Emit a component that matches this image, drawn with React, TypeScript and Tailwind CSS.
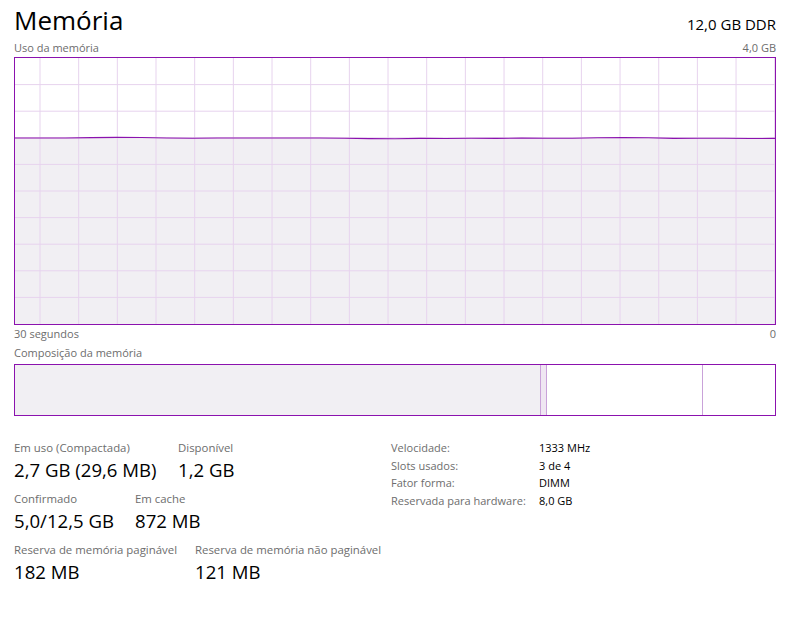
import React from "react";

const font = { fontFamily: '"Open Sans", "Noto Sans", sans-serif' };

function UsageGraph() {
    const w = 760;
    const h = 266;
    const vx = Array.from({ length: 20 }, (_, i) => 25 + i * 38.67).filter((x) => x < w);
    const hy = Array.from({ length: 9 }, (_, i) => (i + 1) * 26.6);
    const level = 80;
    const wobble = [0, 0, 0, -0.4, -0.6, -0.5, 0, 0.2, 0, 0, 0, 0, 0, 0.2, 0.6, 0.8, 0.4, 0.5, 0.3, 0.4, 0.1, 0.3, 0.2, -0.3, -0.4, -0.2, 0.4, 0.3, 0.2, 0.5, 0.4];
    const pts = wobble.map((d, i) => `${(i * w) / (wobble.length - 1)},${level + d}`).join(" ");

    return (
        <svg width={w} height={h} className="block">
            <polygon points={`0,${h} ${pts} ${w},${h}`} fill="#f1eff3" />
            {vx.map((x) => (
                <line key={x} x1={x} y1={0} x2={x} y2={h} stroke="#e7d3ee" strokeWidth={1} />
            ))}
            {hy.map((y) => (
                <line key={y} x1={0} y1={y} x2={w} y2={y} stroke="#e7d3ee" strokeWidth={1} />
            ))}
            <polyline points={pts} fill="none" stroke="#8b12ae" strokeWidth={1.1} />
        </svg>
    );
}

function Stat({ label, value, className = "" }: { label: string; value: string; className?: string }) {
    return (
        <div className={className}>
            <div className="text-[11.4px] leading-[16px] text-[#6d6d6d] whitespace-nowrap">{label}</div>
            <div className="text-[18.6px] leading-[26px] text-black mt-[1px] whitespace-nowrap">{value}</div>
        </div>
    );
}

const details = [
    ["Velocidade:", "1333 MHz"],
    ["Slots usados:", "3 de 4"],
    ["Fator forma:", "DIMM"],
    ["Reservada para hardware:", "8,0 GB"],
];

export default function App() {
    return (
        <div className="w-[800px] h-[623px] bg-white pl-[14px] pr-[24px] overflow-hidden" style={font}>
            <div className="flex items-baseline justify-between h-[40px]">
                <h1 className="text-[26px] leading-[40px] font-normal text-black">Memória</h1>
                <span className="text-[15px] text-black">12,0 GB DDR</span>
            </div>
            <div className="flex justify-between text-[11px] leading-[16px] text-[#6d6d6d]">
                <span>Uso da memória</span>
                <span>4,0 GB</span>
            </div>
            <div className="border border-[#8b12ae] mt-[1px]">
                <UsageGraph />
            </div>
            <div className="flex justify-between text-[11px] leading-[18px] text-[#6d6d6d]">
                <span>30 segundos</span>
                <span>0</span>
            </div>
            <div className="text-[11px] leading-[18px] text-[#6d6d6d] mt-[1px]">Composição da memória</div>
            <div className="flex h-[52px] border border-[#8b12ae] mt-[2px]">
                <div className="w-[526px] bg-[#f1eff3] border-r border-[#c9a2d9]" />
                <div className="w-[6px] bg-[#efe6f2] border-r border-[#c9a2d9]" />
                <div className="w-[156px] border-r border-[#c9a2d9]" />
                <div className="flex-1" />
            </div>
            <div className="flex mt-[24px]">
                <div className="w-[377px]">
                    <div className="flex">
                        <Stat label="Em uso (Compactada)" value="2,7 GB (29,6 MB)" className="w-[164px]" />
                        <Stat label="Disponível" value="1,2 GB" />
                    </div>
                    <div className="flex mt-[8px]">
                        <Stat label="Confirmado" value="5,0/12,5 GB" className="w-[121px]" />
                        <Stat label="Em cache" value="872 MB" />
                    </div>
                    <div className="flex mt-[8px]">
                        <Stat label="Reserva de memória paginável" value="182 MB" className="w-[181px]" />
                        <Stat label="Reserva de memória não paginável" value="121 MB" />
                    </div>
                </div>
                <div className="flex flex-col -mt-[1px]">
                    {details.map(([k, v]) => (
                        <div key={k} className="flex text-[11px] leading-[17.7px] whitespace-nowrap">
                            <span className="w-[148px] text-[#6d6d6d]">{k}</span>
                            <span className="text-black">{v}</span>
                        </div>
                    ))}
                </div>
            </div>
        </div>
    );
}
